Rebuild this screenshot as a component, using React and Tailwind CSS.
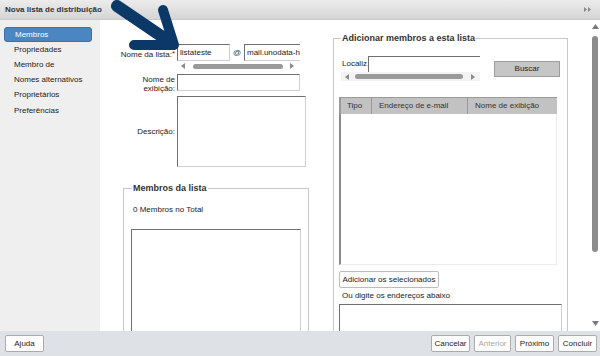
const inset = 'border border-[#cfcfcf] border-t-[#6f6f6f] border-l-[#6f6f6f] bg-white';

const navItems = ['Membros', 'Propriedades', 'Membro de', 'Nomes alternativos', 'Proprietários', 'Preferências'];

function TriLeft() {
  return (
    <svg width="4" height="6" viewBox="0 0 4 6" className="shrink-0">
      <path d="M4 0 L0 3 L4 6 Z" fill="#8a8a8a" />
    </svg>
  );
}

function TriRight() {
  return (
    <svg width="4" height="6" viewBox="0 0 4 6" className="shrink-0">
      <path d="M0 0 L4 3 L0 6 Z" fill="#8a8a8a" />
    </svg>
  );
}

function Button({ children, className = '', disabled }) {
  return (
    <button
      type="button"
      className={`h-[17px] border border-[#ababab] bg-white rounded-[2px] text-[8px] leading-none ${disabled ? 'text-[#a8a8a8]' : 'text-[#222]'} ${className}`}
    >
      {children}
    </button>
  );
}

function Sidebar() {
  return (
    <aside className="w-[100px] shrink-0 bg-[#efefef] pt-[7px] px-[4px]">
      {navItems.map((label, i) => (
        <div
          key={label}
          className={`h-[15.2px] w-[88px] flex items-center pl-[10px] ${
            i === 0
              ? 'bg-[#4a86c2] border border-[#3b6fa6] rounded-[3px] text-white'
              : 'text-[#222]'
          }`}
        >
          {label}
        </div>
      ))}
    </aside>
  );
}

function LeftColumn() {
  return (
    <div className="w-[233px] shrink-0 pt-[24px] flex flex-col">
      {/* Nome da lista */}
      <div className="flex items-start">
        <div className="w-[75px] h-[17px] flex items-end justify-end pb-[1px]">
          Nome da lista:<span className="text-[#a00000] self-start mt-[5px]">*</span>
        </div>
        <div className="ml-[2px] w-[123px] flex flex-col">
          <div className="flex items-center h-[17px] overflow-hidden">
            <input readOnly defaultValue="listateste" className={`${inset} w-[53px] h-[17px] shrink-0 px-[2px] text-[8px] text-[#222] outline-none`} />
            <span className="w-[14px] shrink-0 text-center text-[#444]">@</span>
            <input readOnly defaultValue="mail.unodata-hub" className={`${inset} w-[70px] h-[17px] shrink-0 px-[2px] text-[8px] text-[#222] outline-none`} />
          </div>
          <div className="flex items-center h-[8px] mt-[1px]">
            <div className="ml-[4px]"><TriLeft /></div>
            <div className="ml-[8px] w-[90px] h-[5px] rounded-full bg-[#9a9a9a]" />
            <div className="ml-[7px]"><TriRight /></div>
          </div>
        </div>
      </div>

      {/* Nome de exibição */}
      <div className="flex items-start mt-[4px]">
        <div className="w-[75px] text-right leading-[9px] pt-[1px]">
          Nome de<br />exibição:
        </div>
        <input readOnly className={`${inset} ml-[2px] w-[123px] h-[17px] outline-none`} />
      </div>

      {/* Descrição */}
      <div className="flex items-center mt-[3px]">
        <div className="w-[75px] text-right">Descrição:</div>
        <textarea readOnly className={`${inset} ml-[2px] w-[129px] h-[71px] resize-none outline-none`} />
      </div>

      {/* Membros da lista */}
      <fieldset className="mt-[15.5px] ml-[23px] w-[186px] h-[220px] border border-[#c8c8c8]">
        <legend className="ml-[8px] px-[1px] text-[9px] leading-[11px] font-bold text-[#333]">Membros da lista</legend>
        <div className="pl-[9px] mt-[11px]">0 Membros no Total</div>
        <div className={`${inset} ml-[7px] mt-[14px] w-[170px] h-[200px]`} />
      </fieldset>
    </div>
  );
}

function RightFieldset() {
  return (
    <fieldset className="mt-[13px] w-[235px] h-[330px] shrink-0 border border-[#c8c8c8]">
      <legend className="ml-[7px] px-[1px] text-[9px] leading-[11px] font-bold text-[#333]">Adicionar membros a esta lista</legend>

      <div className="flex items-start mt-[12px]">
        <div className="flex flex-col">
          <div className="flex items-center h-[16px]">
            <span className="ml-[8px] w-[26px]">Localiz.</span>
            <input readOnly className="w-[112px] h-[16px] bg-white border-t border-l border-[#6f6f6f] outline-none" />
          </div>
          <div className="flex items-center h-[9px] ml-[7px] w-[139px] bg-[#f3f3f3]">
            <div className="ml-[4px]"><TriLeft /></div>
            <div className="ml-[6px] w-[108px] h-[5px] rounded-full bg-[#9a9a9a]" />
            <div className="ml-[8px]"><TriRight /></div>
          </div>
        </div>
        <button type="button" className="ml-[14px] mt-[5px] w-[66px] h-[16px] bg-[#c6c6c6] border border-[#9d9d9d] text-[8px] leading-none text-[#222]">
          Buscar
        </button>
      </div>

      {/* Results table */}
      <div className="ml-[5px] mt-[16px] w-[218px]">
        <div className="flex h-[17px] bg-[#c2c2c2] border-t border-l-2 border-[#9a9a9a] text-[#333]">
          <div className="w-[31px] pl-[6px] flex items-center border-r border-[#9a9a9a]">Tipo</div>
          <div className="w-[96px] pl-[7px] flex items-center border-r border-[#9a9a9a]">Endereço de e-mail</div>
          <div className="flex-1 pl-[7px] flex items-center">Nome de exibição</div>
        </div>
        <div className="h-[151px] bg-white border-l-2 border-[#8a8a8a] border-r border-b border-r-[#ececec] border-b-[#ececec]" />
      </div>

      <Button className="ml-[5px] mt-[6px] w-[100px] border-[#bdbdbd] rounded-[1px]">Adicionar os selecionados</Button>
      <div className="ml-[8px] mt-[3px]">Ou digite os endereços abaixo</div>
      <textarea readOnly className={`${inset} ml-[5px] mt-[3px] w-[223px] h-[60px] resize-none outline-none block`} />
    </fieldset>
  );
}

function Scrollbar() {
  return (
    <div className="ml-auto mr-[1px] w-[8px] flex flex-col items-center pt-[4px] pb-[5px]">
      <svg width="7" height="5" viewBox="0 0 7 5">
        <path d="M3.5 0 L7 5 L0 5 Z" fill="#7a7a7a" />
      </svg>
      <div className="mt-[7px] w-[6px] h-[216px] rounded-[3px] bg-[#8b8b8b]" />
      <div className="flex-1" />
      <svg width="7" height="5" viewBox="0 0 7 5">
        <path d="M0 0 L7 0 L3.5 5 Z" fill="#7a7a7a" />
      </svg>
    </div>
  );
}

export default function App() {
  return (
    <div className="relative w-[600px] h-[356px] overflow-hidden bg-white flex flex-col font-['Liberation_Sans',Arial,sans-serif] text-[8px] leading-[10px] text-[#222]">
      {/* Title bar */}
      <div className="h-[20px] shrink-0 flex items-center px-[5px] bg-gradient-to-b from-[#ececec] to-[#d5d5d5] border-b border-[#c9c9c9]">
        <span className="font-bold text-[8px] text-[#333]">Nova lista de distribuição</span>
        <svg width="7" height="5" viewBox="0 0 7 5" className="ml-auto mr-[4px]">
          <path d="M0 0 L3 2.5 L0 5 Z M4 0 L7 2.5 L4 5 Z" fill="#8a8a8a" />
        </svg>
      </div>

      <div className="flex flex-1 min-h-0">
        <Sidebar />
        <main className="flex flex-1 min-w-0 overflow-hidden">
          <LeftColumn />
          <RightFieldset />
          <Scrollbar />
        </main>
      </div>

      {/* Footer */}
      <div className="h-[25px] shrink-0 flex items-center pl-[5px] pr-[3px] bg-[#dee1e6]">
        <Button className="w-[39px]">Ajuda</Button>
        <div className="ml-auto flex gap-[4px]">
          <Button className="w-[39px]">Cancelar</Button>
          <Button className="w-[37px]" disabled>Anterior</Button>
          <Button className="w-[39px]">Próximo</Button>
          <Button className="w-[39px]">Concluir</Button>
        </div>
      </div>

      {/* Annotation arrow */}
      <svg width="80" height="56" viewBox="0 0 80 56" className="absolute left-[105px] top-0 pointer-events-none">
        <path d="M12 6 L65 42" stroke="#0c3868" strokeWidth="12" strokeLinecap="round" fill="none" />
        <path d="M58 10 L69 45 L29 45" stroke="#0c3868" strokeWidth="10" strokeLinecap="round" strokeLinejoin="round" fill="none" />
      </svg>
    </div>
  );
}
